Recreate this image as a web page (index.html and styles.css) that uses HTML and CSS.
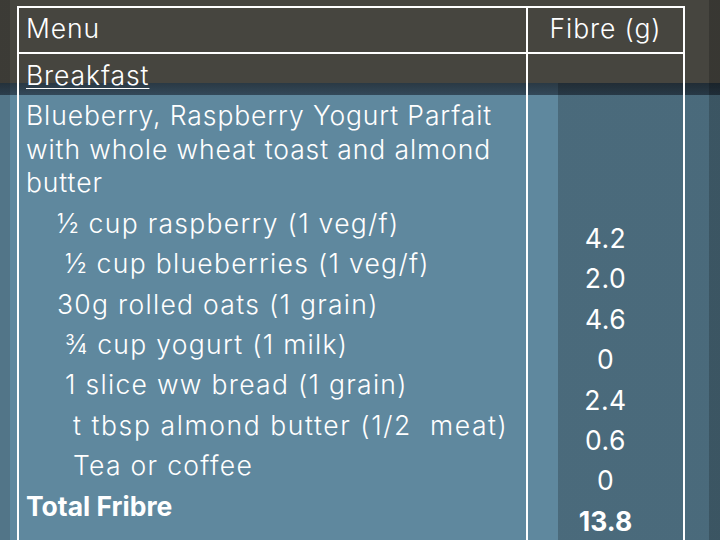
FILE: index.html
```html
<!DOCTYPE html>
<html>
<head>
<meta charset="utf-8">
<link rel="stylesheet" href="styles.css">
</head>
<body>
<div class="table">
  <div class="cell head left">Menu</div>
  <div class="cell head right">Fibre (g)</div>
  <div class="cell body left">
    <p class="u">Breakfast</p>
    <p>Blueberry, Raspberry Yogurt Parfait<br>with whole wheat toast and almond<br>butter</p>
    <p class="i4 w1">½ cup raspberry (1 veg/f)</p>
    <p class="i5 w1">½ cup blueberries (1 veg/f)</p>
    <p class="i4 w1">30g rolled oats (1 grain)</p>
    <p class="i5 w1">¾ cup yogurt (1 milk)</p>
    <p class="i5 w1">1 slice ww bread (1 grain)</p>
    <p class="i6 w2">t tbsp almond butter (1/2&nbsp; meat)</p>
    <p class="i6 w1">Tea or coffee</p>
    <p class="b">Total Fribre</p>
  </div>
  <div class="cell body right nums">
    <p>4.2</p>
    <p>2.0</p>
    <p>4.6</p>
    <p>0</p>
    <p>2.4</p>
    <p>0.6</p>
    <p>0</p>
    <p class="b">13.8</p>
  </div>
</div>
</body>
</html>
```

FILE: styles.css
```css
html, body {
  margin: 0;
  padding: 0;
}
body {
  width: 720px;
  height: 540px;
  overflow: hidden;
  font-family: "Inter", "DejaVu Sans", sans-serif;
  color: #fff;
  background:
    linear-gradient(to right, rgba(0,0,0,0.14) 0 10px, transparent 10px 709px, rgba(0,0,0,0.2) 709px) 0 0 / 100% 100% no-repeat,
    linear-gradient(to right, transparent 0 558px, rgba(0,0,0,0.22) 558px) 0 83px / 100% 100% no-repeat,
    linear-gradient(#2a3944, #33495a) 0 83px / 100% 12px no-repeat,
    linear-gradient(#5f889e, #5f889e) 0 95px / 100% 100% no-repeat,
    #46453f;
}
.table {
  margin: 6px 0 0 17px;
  width: 664px;
  height: 560px;
  border: 2px solid #fff;
  border-bottom: none;
  display: grid;
  grid-template-columns: 509px 1fr;
  grid-template-rows: 46px 1fr;
}
.cell {
  font-size: 26.5px;
  font-weight: 300;
  letter-spacing: 0.9px;
}
.head {
  border-bottom: 2px solid #fff;
  line-height: 40px;
}
.left {
  padding-left: 7px;
}
.head.left, .body.left {
  border-right: 2px solid #fff;
}
.head.right {
  text-align: center;
}
p {
  margin: 0 0 6.9px 0;
  line-height: 33.5px;
}
.body.left {
  padding-top: 5px;
}
.u {
  text-decoration: underline;
  text-decoration-thickness: 1px;
  text-underline-offset: 3px;
}
.b {
  font-weight: 700;
  letter-spacing: 0;
}
.w1 { letter-spacing: 1.3px; }
.w2 { letter-spacing: 1.6px; }
.i4 { padding-left: 31px; }
.i5 { padding-left: 39px; }
.i6 { padding-left: 47px; }
.nums {
  text-align: center;
  padding-top: 168px;
  font-weight: 400;
  letter-spacing: 0.5px;
}
.nums .b {
  font-weight: 700;
}
```
